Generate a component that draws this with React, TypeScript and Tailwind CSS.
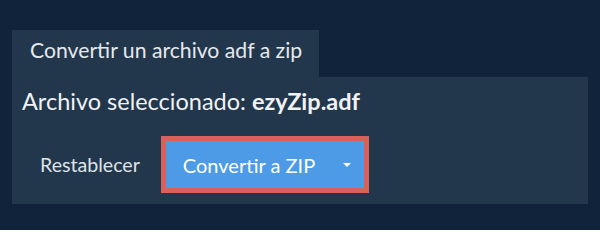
import React from "react";

export default function App() {
  return (
    <div className="w-full h-[230px] bg-[#11233a] px-3 pt-[30px] font-['Lato',sans-serif]">
      {/* Tab */}
      <div className="inline-flex h-[47px] items-center bg-[#22364c] pl-[18px] pr-[17px] pb-[5px] text-[21.2px] text-[#e6e9ec]">
        Convertir un archivo adf a zip
      </div>

      {/* Panel */}
      <div className="h-[127px] bg-[#22364c] px-[10px] pt-[9px]">
        <div className="text-[23.5px] leading-[30px] text-[#f0f2f4]">
          Archivo seleccionado: <span className="font-bold">ezyZip.adf</span>
        </div>

        <div className="mt-[20px] flex items-center">
          <button className="px-[18px] text-[19.6px] text-[#dfe3e7]">Restablecer</button>
          <div className="ml-[3px] border-[5px] border-[#d9605b]">
            <button className="flex h-[47px] w-[198px] items-center bg-[#4d9be6] pl-[17px] pr-[13px] text-[20px] text-white">
              <span>Convertir a ZIP</span>
              <svg className="ml-auto" width="8" height="4" viewBox="0 0 8 4">
                <path d="M0 0h8L4 4z" fill="white" />
              </svg>
            </button>
          </div>
        </div>
      </div>
    </div>
  );
}
